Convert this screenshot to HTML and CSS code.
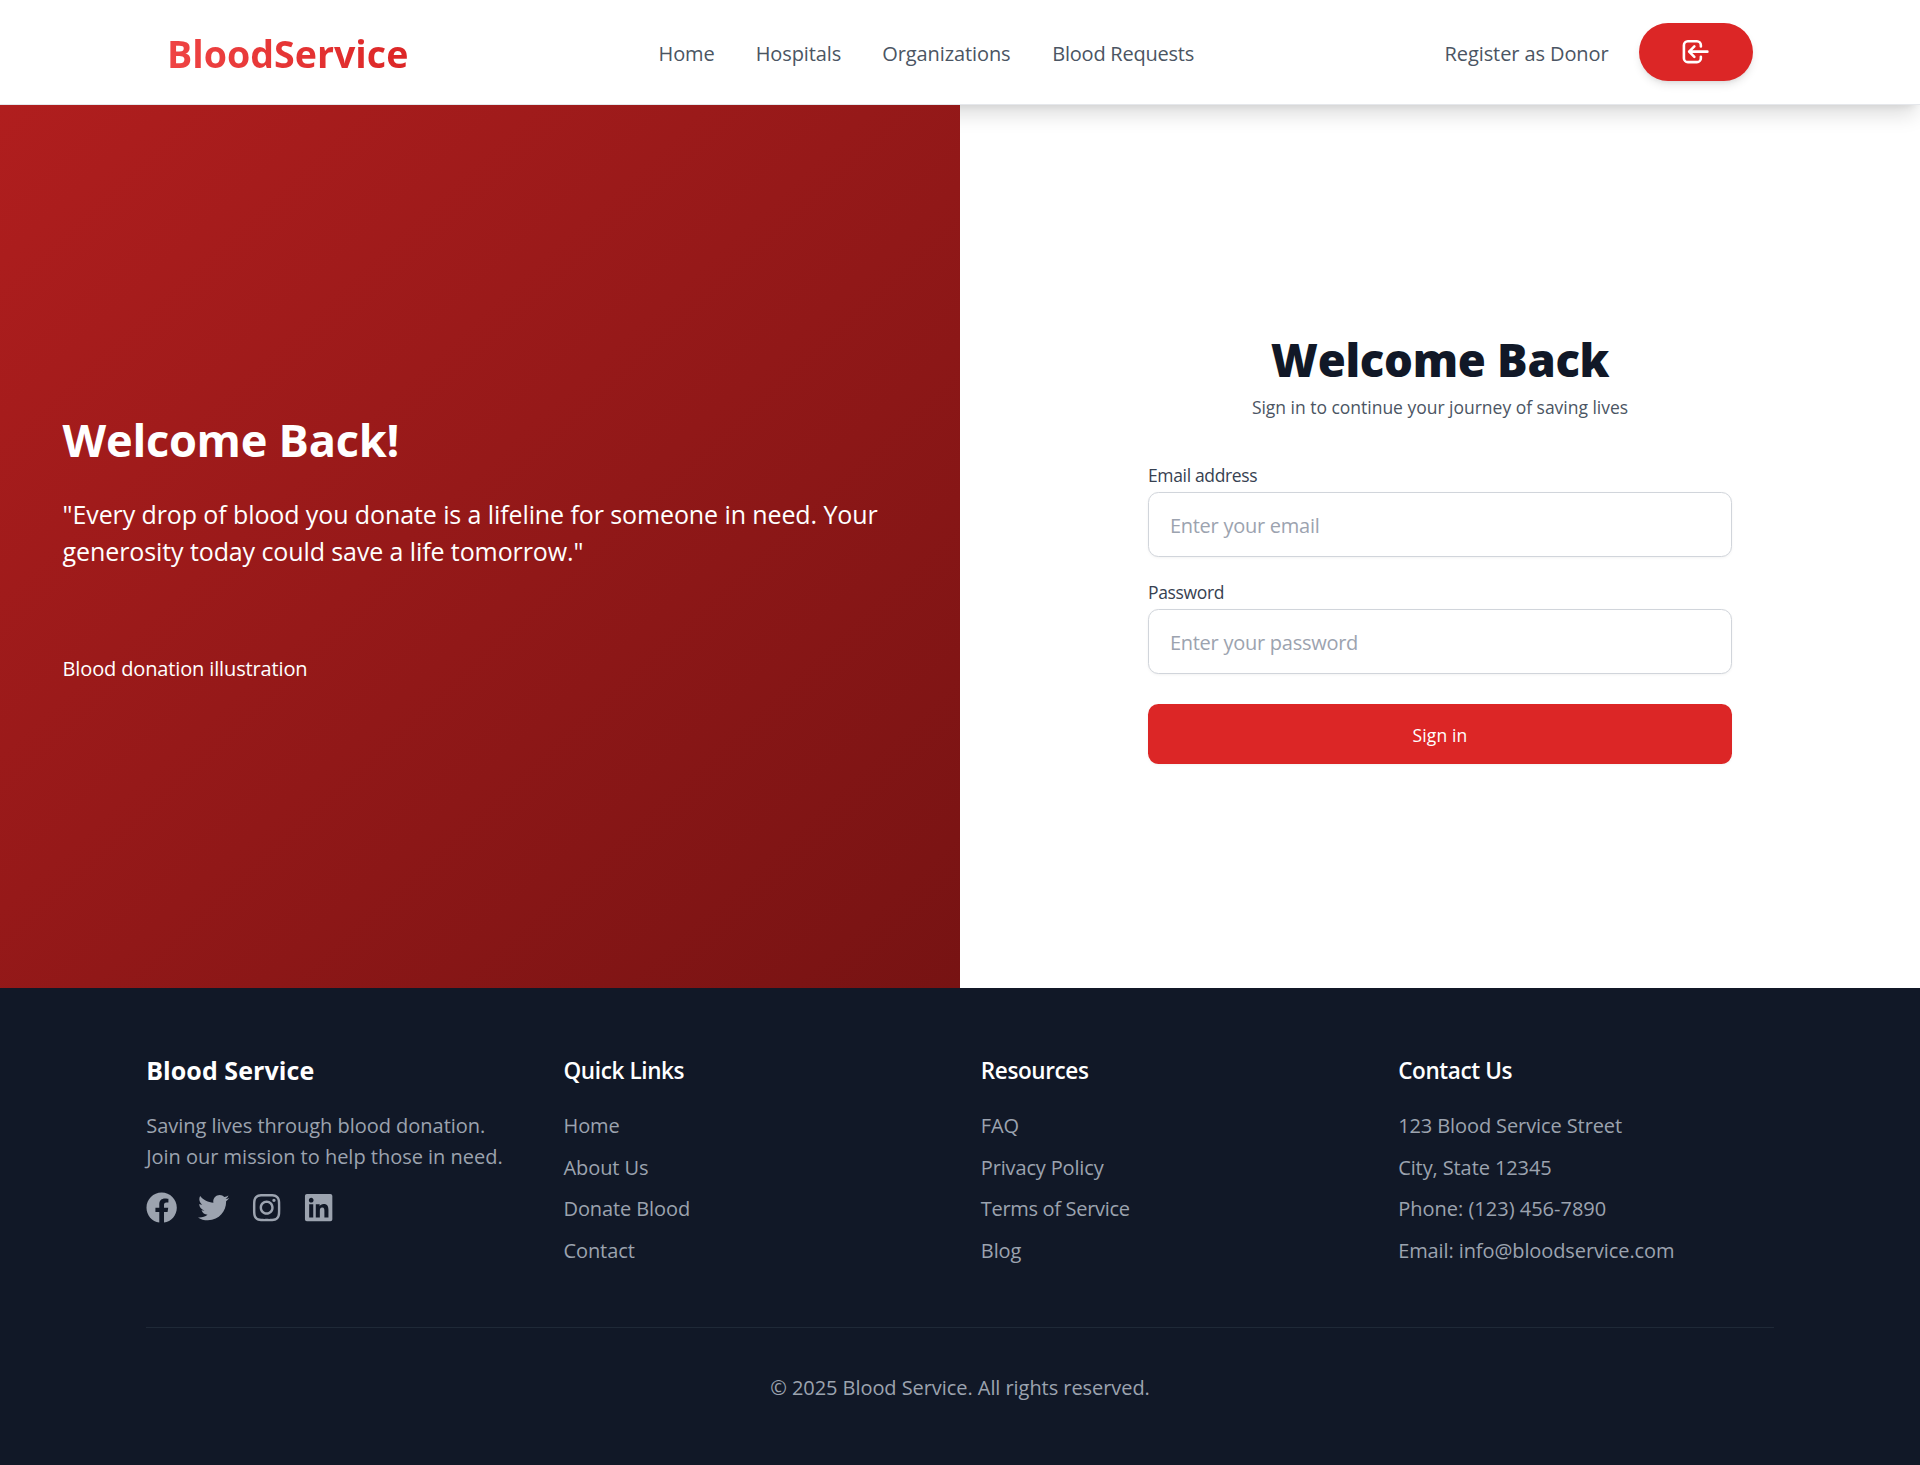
FILE: index.html
```
<!DOCTYPE html>
<html lang="en">
<head>
<meta charset="utf-8">
<title>BloodService</title>
<link rel="stylesheet" href="styles.css">
</head>
<body>
<header class="site-header">
  <nav class="nav">
    <a class="logo">BloodService</a>
    <div class="nav-links">
      <a class="w-home">Home</a><a class="w-hospitals">Hospitals</a><a class="w-orgs">Organizations</a><a class="w-requests">Blood Requests</a>
    </div>
    <div class="nav-actions">
      <a class="register">Register as Donor</a>
      <button class="login" aria-label="Log in">
        <svg viewBox="0 0 24 24" fill="none" stroke="currentColor" stroke-width="2" stroke-linecap="round" stroke-linejoin="round"><path d="M11 16l-4-4m0 0l4-4m-4 4h14m-5 4v1a3 3 0 01-3 3H6a3 3 0 01-3-3V7a3 3 0 013-3h7a3 3 0 013 3v1"/></svg>
      </button>
    </div>
  </nav>
</header>
<main class="hero">
  <section class="hero-banner">
    <h2>Welcome Back!</h2>
    <p class="quote">"Every drop of blood you donate is a lifeline for someone in need. Your<br>generosity today could save a life tomorrow."</p>
    <p class="caption">Blood donation illustration</p>
  </section>
  <section class="hero-form">
    <form class="form">
      <h1>Welcome Back</h1>
      <p class="subtitle">Sign in to continue your journey of saving lives</p>
      <label for="email">Email address</label>
      <input id="email" type="email" placeholder="Enter your email">
      <label for="password">Password</label>
      <input id="password" type="password" placeholder="Enter your password">
      <button class="submit" type="button">Sign in</button>
    </form>
  </section>
</main>
<footer class="footer">
  <div class="footer-inner">
    <div class="footer-grid">
      <div>
        <h3>Blood Service</h3>
        <p class="about">Saving lives through blood donation.<br>Join our mission to help those in need.</p>
        <div class="social">
          <svg viewBox="0 0 512 512"><path d="M504 256C504 119 393 8 256 8S8 119 8 256c0 123.78 90.69 226.38 209.25 245V327.69h-63V256h63v-54.64c0-62.15 37-96.48 93.67-96.48 27.14 0 55.52 4.84 55.52 4.84v61h-31.28c-30.8 0-40.41 19.12-40.41 38.73V256h68.78l-11 71.69h-57.78V501C413.31 482.38 504 379.78 504 256z"/></svg>
          <svg viewBox="0 0 512 512"><path d="M459.37 151.716c.325 4.548.325 9.097.325 13.645 0 138.72-105.583 298.558-298.558 298.558-59.452 0-114.68-17.219-161.137-47.106 8.447.974 16.568 1.299 25.34 1.299 49.055 0 94.213-16.568 130.274-44.832-46.132-.975-84.792-31.188-98.112-72.772 6.498.974 12.995 1.624 19.818 1.624 9.421 0 18.843-1.3 27.614-3.573-48.081-9.747-84.143-51.98-84.143-102.985v-1.299c13.969 7.797 30.214 12.67 47.431 13.319-28.264-18.843-46.781-51.005-46.781-87.391 0-19.492 5.197-37.36 14.294-52.954 51.655 63.675 129.3 105.258 216.365 109.807-1.624-7.797-2.599-15.918-2.599-24.04 0-57.828 46.782-104.934 104.934-104.934 30.213 0 57.502 12.67 76.67 33.137 23.715-4.548 46.456-13.32 66.599-25.34-7.798 24.366-24.366 44.833-46.132 57.827 21.117-2.273 41.584-8.122 60.426-16.243-14.292 20.791-32.161 39.308-52.628 54.253z"/></svg>
          <svg viewBox="0 0 448 512"><path d="M224.1 141c-63.6 0-114.9 51.3-114.9 114.9s51.3 114.9 114.9 114.9S339 319.5 339 255.9 287.7 141 224.1 141zm0 189.6c-41.1 0-74.7-33.5-74.7-74.7s33.5-74.7 74.7-74.7 74.7 33.5 74.7 74.7-33.6 74.7-74.7 74.7zm146.4-194.3c0 14.9-12 26.8-26.8 26.8-14.9 0-26.8-12-26.8-26.8s12-26.8 26.8-26.8 26.8 12 26.8 26.8zm76.1 27.2c-1.7-35.9-9.9-67.7-36.2-93.9-26.2-26.2-58-34.4-93.9-36.2-37-2.1-147.9-2.1-184.9 0-35.8 1.7-67.6 9.9-93.9 36.1s-34.4 58-36.2 93.9c-2.1 37-2.1 147.9 0 184.9 1.7 35.9 9.9 67.7 36.2 93.9s58 34.4 93.9 36.2c37 2.1 147.9 2.1 184.9 0 35.9-1.7 67.7-9.9 93.9-36.2 26.2-26.2 34.4-58 36.2-93.9 2.1-37 2.1-147.8 0-184.8zM398.8 388c-7.8 19.6-22.9 34.7-42.6 42.6-29.5 11.7-99.5 9-132.1 9s-102.7 2.6-132.1-9c-19.6-7.8-34.7-22.9-42.6-42.6-11.7-29.5-9-99.5-9-132.1s-2.6-102.7 9-132.1c7.8-19.6 22.9-34.7 42.6-42.6 29.5-11.7 99.5-9 132.1-9s102.7-2.6 132.1 9c19.6 7.8 34.7 22.9 42.6 42.6 11.7 29.5 9 99.5 9 132.1s2.7 102.7-9 132.1z"/></svg>
          <svg viewBox="0 0 448 512"><path d="M416 32H31.9C14.3 32 0 46.5 0 64.3v383.4C0 465.5 14.3 480 31.9 480H416c17.6 0 32-14.5 32-32.3V64.3c0-17.8-14.4-32.3-32-32.3zM135.4 416H69V202.2h66.5V416zm-33.2-243c-21.3 0-38.5-17.3-38.5-38.5S80.9 96 102.2 96c21.2 0 38.5 17.3 38.5 38.5 0 21.3-17.2 38.5-38.5 38.5zm282.1 243h-66.4V312c0-24.8-.5-56.7-34.5-56.7-34.6 0-39.9 27-39.9 54.9V416h-66.4V202.2h63.7v29.2h.9c8.9-16.8 30.6-34.5 62.9-34.5 67.2 0 79.7 44.3 79.7 101.9V416z"/></svg>
        </div>
      </div>
      <div>
        <h4>Quick Links</h4>
        <ul><li>Home</li><li>About Us</li><li>Donate Blood</li><li>Contact</li></ul>
      </div>
      <div>
        <h4>Resources</h4>
        <ul><li>FAQ</li><li class="policy">Privacy Policy</li><li class="terms">Terms of Service</li><li>Blog</li></ul>
      </div>
      <div>
        <h4>Contact Us</h4>
        <ul><li>123 Blood Service Street</li><li>City, State 12345</li><li class="phone">Phone: (123) 456-7890</li><li>Email: info@bloodservice.com</li></ul>
      </div>
    </div>
    <p class="copyright">© 2025 Blood Service. All rights reserved.</p>
  </div>
</footer>
</body>
</html>
```
FILE: styles.css
```
* { box-sizing: border-box; margin: 0; padding: 0; }

body {
  font-family: "Open Sans", "Noto Sans", sans-serif;
  font-size: 20px;
  line-height: 31.3px;
  letter-spacing: -0.005em;
  color: #111827;
  background: #fff;
}

/* Header */
.site-header {
  height: 105px;
  background: #fff;
  border-bottom: 1px solid #e5e7eb;
  box-shadow: 0 13px 19.5px -4px rgba(0, 0, 0, .14), 0 5px 8px -5px rgba(0, 0, 0, .1);
  position: relative;
}
.nav {
  width: 1586px;
  height: 104px;
  margin: 0 auto;
  display: grid;
  grid-template-columns: 491.5px 1fr auto;
  align-items: center;
}
.logo {
  justify-self: start;
  padding-top: 3px;
  font-size: 37.6px;
  font-weight: 700;
  line-height: 47px;
  letter-spacing: 0;
  background: linear-gradient(to right, #ef4444, #dc2626);
  -webkit-background-clip: text;
  background-clip: text;
  color: transparent;
}
.nav-links { display: flex; gap: 41.7px; padding-top: 3px; color: #4b5563; }
.nav-links a { white-space: nowrap; }
.w-home { width: 55.5px; }
.w-hospitals { width: 84.9px; }
.w-orgs { width: 128.4px; }
.w-requests { letter-spacing: -0.012em; }
.nav-actions { display: flex; align-items: center; gap: 30px; color: #4b5563; }
.register { padding-top: 3px; letter-spacing: -0.005em; }
.login {
  width: 114.5px;
  height: 57.4px;
  border: 0;
  border-radius: 29px;
  background: #dc2626;
  color: #fff;
  display: flex;
  align-items: center;
  justify-content: center;
  box-shadow: 0 5px 8px -1px rgba(0, 0, 0, .1), 0 3px 5px -3px rgba(0, 0, 0, .1);
}
.login svg { width: 31.3px; height: 31.3px; }

/* Hero */
.hero { display: grid; grid-template-columns: 1fr 1fr; height: 883px; }
.hero-banner {
  position: relative;
  padding: 302px 62.6px 0;
  color: #fff;
  background: linear-gradient(to bottom right, #b01e1e, #771313);
}
.hero-banner h2 {
  font-size: 45.2px;
  line-height: 66px;
  font-weight: 700;
  letter-spacing: -0.006em;
}
.quote { margin-top: 23px; font-size: 25px; line-height: 36.5px; }
.caption { margin-top: 84px; letter-spacing: -0.007em; }

.hero-form { display: flex; justify-content: center; padding-top: 222px; }
.form { width: 584px; }
.form h1 {
  text-align: center;
  font-size: 45.4px;
  line-height: 64px;
  font-weight: 800;
  letter-spacing: -0.006em;
}
.subtitle {
  margin-top: 3px;
  margin-bottom: 42px;
  text-align: center;
  font-size: 17.5px;
  line-height: 26px;
  letter-spacing: -0.001em;
  color: #4b5563;
}
.form label {
  display: block;
  font-size: 17.5px;
  line-height: 26px;
  letter-spacing: -0.02em;
  color: #374151;
}
.form input {
  display: block;
  width: 100%;
  height: 65px;
  margin-top: 4px;
  margin-bottom: 22px;
  padding: 2px 20.9px 0;
  border: 1px solid #d1d5db;
  border-radius: 10.4px;
  font: inherit;
  letter-spacing: -0.013em;
  background: #fff;
  box-shadow: 0 1px 3px rgba(0, 0, 0, .05);
}
.form input::placeholder { color: #9ca3af; opacity: 1; }
.submit {
  display: block;
  width: 100%;
  height: 60px;
  margin-top: 30px;
  padding-top: 2px;
  border: 0;
  border-radius: 10.4px;
  background: #dc2626;
  color: #fff;
  font: 500 17.5px/26px "Open Sans", "Noto Sans", sans-serif;
  letter-spacing: 0.008em;
  box-shadow: 0 1px 3px rgba(0, 0, 0, .05);
}

/* Footer */
.footer { height: 477px; background: #111827; color: #9ca3af; }
.footer-inner { width: 1627.6px; margin: 0 auto; padding-top: 62.6px; }
.footer-grid {
  display: grid;
  grid-template-columns: repeat(4, 1fr);
  column-gap: 41.7px;
  height: 277.4px;
  border-bottom: 1px solid #1f2937;
}
.footer h3, .footer h4 { line-height: 36.5px; color: #fff; }
.footer h3 { padding-top: 1px; margin-bottom: 22px; font-size: 25px; font-weight: 700; letter-spacing: 0.003em; }
.footer h4 { padding-top: 2.5px; margin-bottom: 20.5px; font-size: 22.5px; font-weight: 600; letter-spacing: -0.017em; }
.about { letter-spacing: -0.001em; white-space: nowrap; }
.social { display: flex; gap: 20.9px; margin-top: 19px; }
.social svg { width: 31.3px; height: 31.3px; fill: currentColor; }
.footer ul { list-style: none; }
.footer li { margin-bottom: 10.4px; }
.footer .policy { letter-spacing: -0.008em; }
.footer .terms { letter-spacing: -0.016em; }
.footer .phone { letter-spacing: 0; }
.copyright { padding-top: 44px; text-align: center; letter-spacing: -0.003em; }
```
